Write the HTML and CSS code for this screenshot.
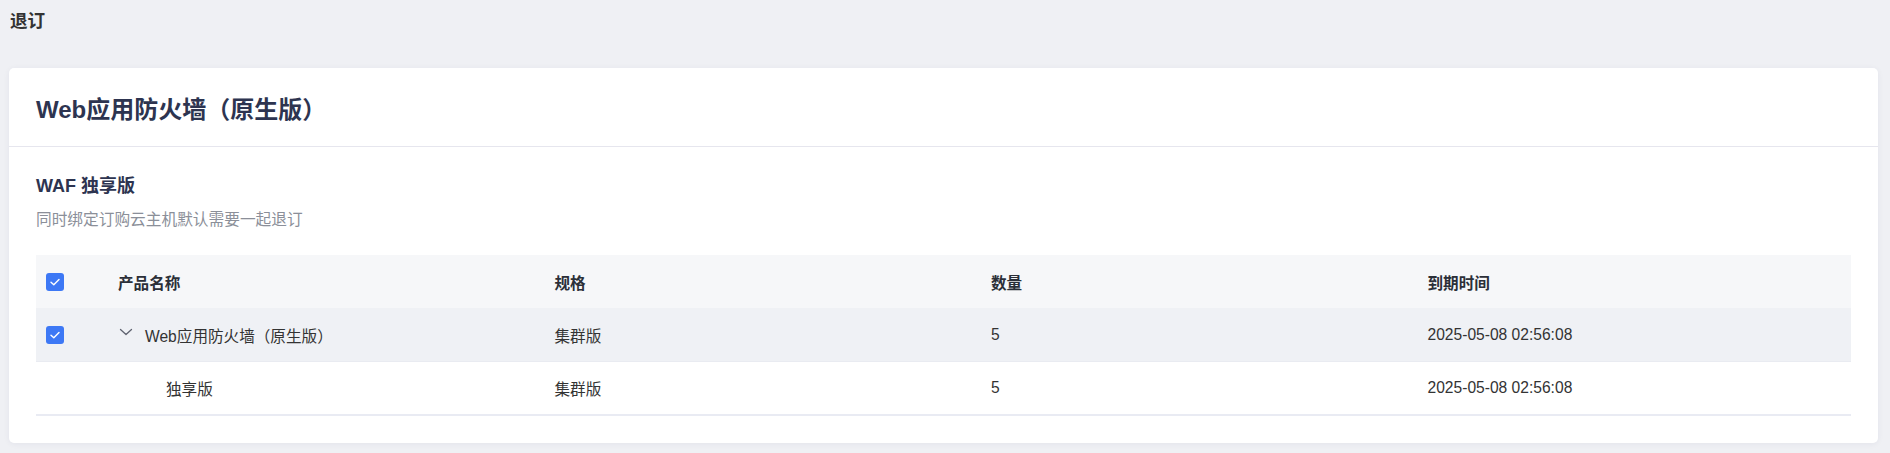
FILE: index.html
```html
<!DOCTYPE html>
<html lang="zh-CN">
<head>
<meta charset="utf-8">
<title>退订</title>
<link rel="stylesheet" href="styles.css">
</head>
<body>
<div class="page">
  <h1 class="page-title">退订</h1>
  <section class="card">
    <header class="card-header">
      <h2 class="card-title">Web应用防火墙（原生版）</h2>
    </header>
    <div class="card-body">
      <h3 class="section-title">WAF 独享版</h3>
      <p class="section-desc">同时绑定订购云主机默认需要一起退订</p>
      <div class="table">
        <div class="row row-head">
          <div class="cell cell-check"><span class="checkbox"><svg viewBox="0 0 18 18" width="18" height="18"><polyline points="5,9.2 7.8,11.8 13,6.4" fill="none" stroke="#fff" stroke-width="1.4" stroke-linecap="round" stroke-linejoin="round"/></svg></span></div>
          <div class="cell">产品名称</div>
          <div class="cell">规格</div>
          <div class="cell">数量</div>
          <div class="cell">到期时间</div>
        </div>
        <div class="row row-parent">
          <div class="cell cell-check"><span class="checkbox"><svg viewBox="0 0 18 18" width="18" height="18"><polyline points="5,9.2 7.8,11.8 13,6.4" fill="none" stroke="#fff" stroke-width="1.4" stroke-linecap="round" stroke-linejoin="round"/></svg></span></div>
          <div class="cell cell-name"><span class="chevron"><svg viewBox="0 0 14 8" width="14" height="8"><polyline points="1.5,1.5 7,6.5 12.5,1.5" fill="none" stroke="#5f6370" stroke-width="1.3" stroke-linecap="round" stroke-linejoin="round"/></svg></span>Web应用防火墙（原生版）</div>
          <div class="cell">集群版</div>
          <div class="cell">5</div>
          <div class="cell">2025-05-08 02:56:08</div>
        </div>
        <div class="row row-child">
          <div class="cell cell-check"></div>
          <div class="cell cell-child">独享版</div>
          <div class="cell">集群版</div>
          <div class="cell">5</div>
          <div class="cell">2025-05-08 02:56:08</div>
        </div>
      </div>
    </div>
  </section>
</div>
</body>
</html>
```

FILE: styles.css
```css
* { box-sizing: border-box; }

html, body {
  margin: 0;
  padding: 0;
  background: #eff0f4;
  font-family: "Liberation Sans", "Noto Sans CJK SC", sans-serif;
  color: #333;
}

.page {
  padding: 9px 12px 11px 9px;
}

.page-title {
  margin: 0 0 35px 0;
  padding-left: 1px;
  font-size: 17.6px;
  line-height: 24px;
  font-weight: 700;
  color: #333;
}

.card {
  background: #fff;
  border-radius: 5px;
  box-shadow: 0 1px 6px rgba(30, 40, 80, 0.06);
}

.card-header {
  height: 79px;
  display: flex;
  align-items: center;
  padding: 0 27px;
  border-bottom: 1px solid #e6e6ee;
}

.card-title {
  margin: 0;
  font-size: 24px;
  font-weight: 700;
  color: #2d3450;
}

.card-body {
  padding: 27px 27px 27px;
}

.section-title {
  margin: 0;
  font-size: 18px;
  line-height: 24px;
  font-weight: 700;
  color: #2d3450;
}

.section-desc {
  margin: 11px 0 24px 0;
  font-size: 15.7px;
  line-height: 22px;
  color: #8b8f99;
}

.table {
  border-bottom: 2px solid #e9ebf3;
  font-size: 15.6px;
  color: #333;
}

.row {
  display: grid;
  grid-template-columns: 69px repeat(4, 1fr);
  align-items: center;
  height: 54px;
}

.row-head {
  height: 53px;
  background: #f6f7f9;
  font-weight: 700;
  color: #2b2f38;
}

.row-parent {
  background: #eff1f5;
  border-bottom: 1px solid #e9ebf1;
}

.row-child {
  height: 52px;
  background: #fff;
}

.cell {
  padding-left: 13px;
  white-space: nowrap;
}

.cell-check {
  padding-left: 10px;
  display: flex;
  align-items: center;
}

.checkbox {
  width: 18px;
  height: 18px;
  border-radius: 3px;
  background: #3d78f5;
  display: inline-flex;
}

.cell-name {
  display: flex;
  align-items: center;
}

.chevron {
  width: 27px;
  display: inline-flex;
  align-items: center;
  padding-left: 1px;
  margin-top: -6px;
}

.cell-child {
  padding-left: 61px;
}
```
